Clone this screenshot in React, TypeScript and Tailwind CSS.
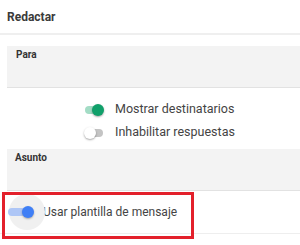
import React from 'react';

interface ToggleProps {
  on: boolean;
}

// small material-style switch used in the recipients block
const GreenToggle = ({ on }: ToggleProps) => {
  return (
    <div className="relative w-[18px] h-[14px] flex items-center">
      <div className={`w-[18px] h-[8px] rounded-full ${on ? 'bg-[#a3dcc5]' : 'bg-[#c4c4c4]'}`}></div>
      <div
        className={`absolute top-[1px] w-[12px] h-[12px] rounded-full shadow-[0_1px_2px_rgba(0,0,0,0.35)] ${
          on ? 'left-[7px] bg-[#10a06a]' : 'left-[-1px] bg-white'
        }`}
      ></div>
    </div>
  );
};

const BlueToggle = () => {
  return (
    <div className="relative w-[24px] h-[14px] flex items-center">
      <div className="absolute left-[1px] top-[-11px] w-[36px] h-[36px] rounded-full bg-[#f0f0f0]"></div>
      <div className="relative w-[22px] h-[8px] rounded-full bg-[#aec6f6]"></div>
      <div className="absolute left-[14px] top-[1px] w-[12px] h-[12px] rounded-full bg-[#3f7ff6] shadow-[0_1px_2px_rgba(0,0,0,0.3)]"></div>
    </div>
  );
};

const App = () => {
  return (
    <div className="relative w-[300px] h-[245px] bg-white overflow-hidden font-['Roboto',_'Liberation_Sans',_sans-serif]">
      <div className="h-[33px] px-[7px] flex items-center">
        <h3 className="text-[12px] font-bold text-[#3a3a3a]">Redactar</h3>
      </div>
      <div className="h-[2px] bg-[#efefef]"></div>

      <div className="mt-[11px] ml-[7px] h-[42px] bg-[#f3f3f3] border-b border-[#e2e2e2] pl-[9px] pt-[2px] text-[10px] leading-[14px]">
        <span className="font-bold text-[#333]">Para</span>
      </div>

      <div className="pt-[10px] pb-[5px] pl-[85px] flex flex-col">
        <div className="h-[23px] flex items-center">
          <GreenToggle on />
          <span className="ml-[12px] text-[12.5px] text-[#444]">Mostrar destinatarios</span>
        </div>
        <div className="h-[23px] flex items-center">
          <GreenToggle on={false} />
          <span className="ml-[12px] text-[12.5px] text-[#444]">Inhabilitar respuestas</span>
        </div>
      </div>

      <div className="ml-[7px] h-[42px] bg-[#f3f3f3] border-b border-[#e2e2e2] pl-[8px] pt-[2px] text-[10px] leading-[14px]">
        <span className="font-bold text-[#333]">Asunto</span>
      </div>

      <div className="h-[43px] pl-[8px] flex items-center border-b border-[#eeeeee]">
        <BlueToggle />
        <span className="ml-[11px] text-[12px] text-[#444]">Usar plantilla de mensaje</span>
      </div>

      <div className="absolute left-[2px] top-[192px] w-[192px] h-[47px] border-[3px] border-[#e3202b]"></div>
    </div>
  );
};

export default App;
